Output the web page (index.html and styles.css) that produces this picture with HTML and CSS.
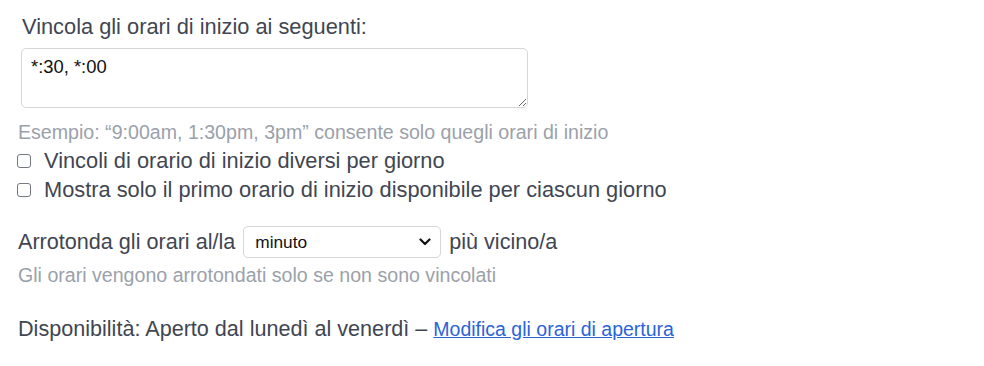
FILE: index.html
```html
<!DOCTYPE html>
<html lang="it">
<head>
<meta charset="utf-8">
<link rel="stylesheet" href="styles.css">
</head>
<body>
<div class="page">
  <div class="constrain">
    <label class="field-label" for="starts">Vincola gli orari di inizio ai seguenti:</label>
    <textarea id="starts" class="starts">*:30, *:00</textarea>
  </div>
  <p class="hint hint-example">Esempio: “9:00am, 1:30pm, 3pm” consente solo quegli orari di inizio</p>
  <div class="checks">
    <label class="check"><span class="box"></span>Vincoli di orario di inizio diversi per giorno</label>
    <label class="check"><span class="box"></span>Mostra solo il primo orario di inizio disponibile per ciascun giorno</label>
  </div>

  <div class="round-row">
    <span>Arrotonda gli orari al/la</span>
    <div class="select">
      <span>minuto</span>
      <svg class="chev" width="12" height="8" viewBox="0 0 12 8"><path d="M1.5 1.5 L6 6 L10.5 1.5" fill="none" stroke="#111" stroke-width="2.2" stroke-linecap="round" stroke-linejoin="round"/></svg>
    </div>
    <span>più vicino/a</span>
  </div>
  <p class="hint hint-round">Gli orari vengono arrotondati solo se non sono vincolati</p>

  <p class="avail">Disponibilità: Aperto dal lunedì al venerdì – <a href="#" class="link">Modifica gli orari di apertura</a></p>
</div>
</body>
</html>
```

FILE: styles.css
```css
html, body {
  margin: 0;
  padding: 0;
  background: #ffffff;
}
body {
  font-family: "Liberation Sans", Arial, sans-serif;
  color: #3f4652;
}
.page {
  padding: 14px 18px 0 18px;
}
.constrain {
  padding-left: 3px;
  display: flex;
  flex-direction: column;
}
.field-label {
  font-size: 21.8px;
  line-height: 26px;
  padding-left: 1px;
  margin-bottom: 8px;
}
.starts {
  width: 507px;
  height: 60px;
  box-sizing: border-box;
  border: 1px solid #d4d6da;
  border-radius: 5px;
  padding: 7px 9px;
  font-family: "Liberation Sans", Arial, sans-serif;
  font-size: 18.4px;
  color: #111;
  resize: vertical;
  margin: 0;
}
.hint {
  color: #9ba1aa;
  font-size: 19.6px;
  margin: 0;
}
.hint-example {
  margin-top: 13px;
  line-height: 22px;
}
.checks {
  margin-top: 3px;
}
.check {
  display: flex;
  align-items: center;
  font-size: 21.8px;
  line-height: 29px;
}
.box {
  width: 14px;
  height: 14px;
  box-sizing: border-box;
  border: 1.5px solid #74787f;
  border-radius: 3px;
  margin-right: 13px;
  margin-left: -1px;
  flex: none;
}
.round-row {
  display: flex;
  align-items: center;
  font-size: 21.6px;
  margin-top: 22px;
  gap: 8px;
}
.select {
  width: 198px;
  height: 32px;
  box-sizing: border-box;
  border: 1px solid #d4d6da;
  border-radius: 5px;
  display: flex;
  align-items: center;
  justify-content: space-between;
  padding: 0 9px 0 11px;
  font-size: 17.3px;
  color: #111;
}
.hint-round {
  margin-top: 6px;
  line-height: 22px;
}
.avail {
  font-size: 21.6px;
  margin: 30px 0 0;
  line-height: 26px;
}
.link {
  color: #2b63d9;
  font-size: 19.5px;
  text-decoration: underline;
}
```
